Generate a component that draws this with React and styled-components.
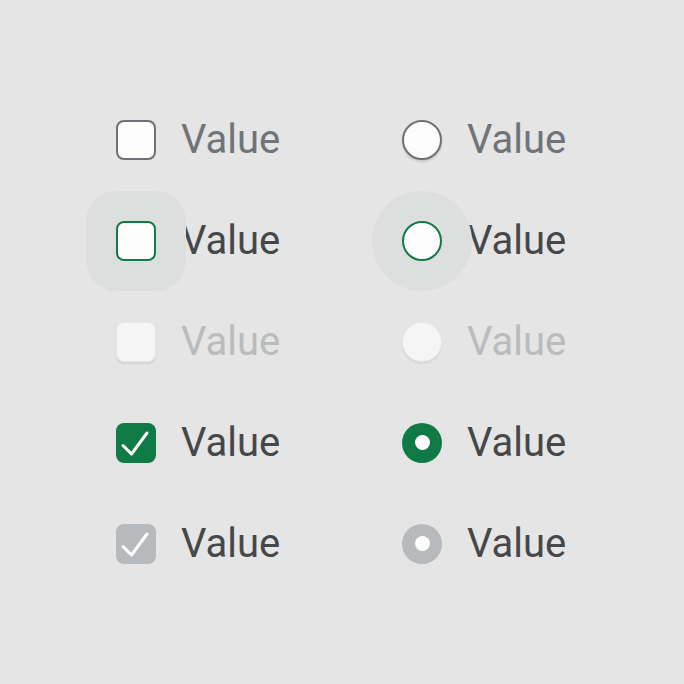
import React from "react";
import styled, { createGlobalStyle, css } from "styled-components";

const GlobalStyle = createGlobalStyle`
  html, body {
    margin: 0;
    padding: 0;
    background: #e5e5e5;
  }
  body {
    font-family: Roboto, "Noto Sans", Arial, sans-serif;
  }
`;

const Page = styled.div`
  width: 684px;
  height: 684px;
  box-sizing: border-box;
  padding: 89px 0 0 116px;
  background: #e5e5e5;
`;

const Grid = styled.div`
  display: grid;
  grid-template-columns: 286px 200px;
  grid-auto-rows: 101px;
`;

const Item = styled.label`
  display: flex;
  align-items: center;
  gap: 25px;
`;

const textColors = {
  rest: "#6f7479",
  hover: "#454749",
  disabled: "#b9bbbd",
  checked: "#454749",
  checkedDisabled: "#454749",
};

const Label = styled.span`
  font-size: 40px;
  line-height: 48px;
  color: ${(p) => textColors[p.$state]};
  letter-spacing: 0;
`;

const Control = styled.span`
  position: relative;
  width: 40px;
  height: 40px;
  flex: none;
  display: flex;
  align-items: center;
  justify-content: center;
  box-sizing: border-box;

  ${(p) =>
    p.$halo &&
    css`
      &::before {
        content: "";
        position: absolute;
        left: -30px;
        top: -30px;
        width: 100px;
        height: 100px;
        border-radius: ${p.$round ? "50%" : "30px"};
        background: #dcdfde;
        z-index: 0;
      }
    `}
`;

const boxStyles = {
  rest: css`
    background: #fdfdfd;
    border: 2.5px solid #6e7175;
  `,
  hover: css`
    background: #fdfdfd;
    border: 2.5px solid #127a47;
  `,
  disabled: css`
    background: #f5f5f5;
    border: 1px solid #e9e9e9;
    box-shadow: 0 1.5px 2px rgba(0, 0, 0, 0.08);
  `,
  checked: css`
    background: #0f7a45;
    border: none;
  `,
  checkedDisabled: css`
    background: #b7babd;
    border: none;
  `,
};

const Box = styled.span`
  position: relative;
  z-index: 1;
  width: 40px;
  height: 40px;
  box-sizing: border-box;
  border-radius: ${(p) => (p.$round ? "50%" : "8px")};
  display: flex;
  align-items: center;
  justify-content: center;
  ${(p) => boxStyles[p.$state]}
  ${(p) =>
    p.$round &&
    p.$state === "rest" &&
    css`
      box-shadow: 0 2px 2px rgba(0, 0, 0, 0.12);
    `}
`;

const Dot = styled.span`
  width: 15px;
  height: 15px;
  border-radius: 50%;
  background: #fdfdfd;
`;

const Check = () => (
  <svg width="40" height="40" viewBox="0 0 40 40">
    <path
      d="M7 22.5 L15.5 31 L31 10"
      fill="none"
      stroke="#ffffff"
      strokeWidth="3"
      strokeLinecap="round"
      strokeLinejoin="round"
    />
  </svg>
);

const Checkbox = ({ state }) => {
  const checked = state === "checked" || state === "checkedDisabled";
  return (
    <Item>
      <Control $halo={state === "hover"}>
        <Box $state={state}>{checked && <Check />}</Box>
      </Control>
      <Label $state={state}>Value</Label>
    </Item>
  );
};

const Radio = ({ state }) => {
  const checked = state === "checked" || state === "checkedDisabled";
  return (
    <Item>
      <Control $halo={state === "hover"} $round>
        <Box $state={state} $round>
          {checked && <Dot />}
        </Box>
      </Control>
      <Label $state={state}>Value</Label>
    </Item>
  );
};

const states = ["rest", "hover", "disabled", "checked", "checkedDisabled"];

export default function App() {
  return (
    <>
      <GlobalStyle />
      <Page>
        <Grid>
          {states.map((s) => (
            <React.Fragment key={s}>
              <Checkbox state={s} />
              <Radio state={s} />
            </React.Fragment>
          ))}
        </Grid>
      </Page>
    </>
  );
}
